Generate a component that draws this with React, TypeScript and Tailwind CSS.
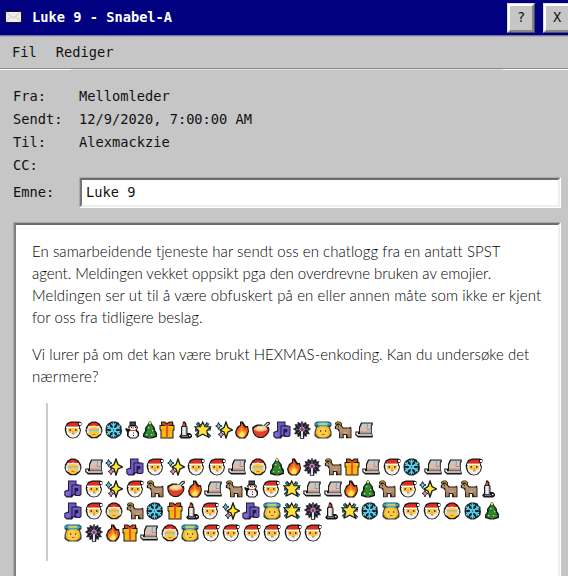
import type { ReactNode } from "react";

type Kind =
  | "santa" | "mrs" | "snowflake" | "snowman" | "tree" | "gift" | "candle" | "star"
  | "sparkles" | "fire" | "bowl" | "notes" | "firework" | "angel" | "goat" | "sled";

const ink = "#171717";

const art: Record<Kind, ReactNode> = {
  santa: (
    <>
      <path d="M1 6 3 2 7 .5H15L17.5 1.5V4L15.5 5.5 17 9 16 13 13 16.5 9 17.5 5 16.5 2 13.5.7 9Z" fill={ink} />
      <path d="M2 8 4 6H14L16 9 15 13 12 16 9 16.7 6 16 3 13Z" fill="#f5f3ef" />
      <path d="M4 7H14V11L12 12H6L4 11Z" fill="#ffc83d" />
      <path d="M2.5 5.5 4 3 7 1.7H14V4L15 5.5Z" fill="#e9291c" />
      <path d="M2 5.5H15V7H2ZM15 2H17V4H15Z" fill="#fff" />
      <path d="M5.5 8H7V10H5.5ZM11 8H12.5V10H11ZM8 12.5H10.5V13.3H8Z" fill="#65401e" />
      <path d="M8 9.5H10V11.5H8Z" fill="#f59f5c" />
    </>
  ),
  mrs: (
    <>
      <path d="M1 6.5 3.5 2.5 7 .5H11L14.5 2.5 17 6.5 17.5 10 16 14 12 17.3H6L2 14 .5 10Z" fill={ink} />
      <path d="M1.8 8 4 4.5H14L16.2 8V12L14 14H4L1.8 12Z" fill="#e6e4e1" />
      <path d="M3.7 7 6 6H12L14.3 7V13L12 15.5 9 16.3 6 15.5 3.7 13Z" fill="#ffc83d" />
      <path d="M3.5 5 6 2.3 9 1.5 12 2.3 14.5 5 12 6 9 5 6 6Z" fill="#e9291c" />
      <path d="M3 5.3 6 5.2 9 4.5 12 5.2 15 5.3 13.5 6.5 9 5.8 4.5 6.5Z" fill="#fff" />
      <path d="M4 9H8V11H4ZM10 9H14V11H10Z" fill="#9fd3e6" />
      <path d="M4 8.8H14" stroke="#8a8a70" strokeWidth=".5" />
      <path d="M7.5 13H10.5V14H7.5Z" fill="#d9662a" />
    </>
  ),
  snowflake: (
    <>
      <path d="M6.5 .5H10.5L13.5 1.5 15 4 16.5 5V8L17 9 16.5 13 14 15.5 10.5 17.5H6.5L3 15.5 1 13 .5 9 1 5 3 2.5Z" fill="#17232b" />
      <path d="M8.5 1.5V16.5M2 5 15 13M2 13 15 5" stroke="#6ad8f0" strokeWidth="1.5" fill="none" />
      <path d="M6 2.5 8.5 4.8 11 2.5M6 15.5 8.5 13.2 11 15.5M2 7.8 4.6 7 4.2 3.8M15 7.8 12.4 7 12.8 3.8M2 10.2 4.6 11 4.2 14.2M15 10.2 12.4 11 12.8 14.2" stroke="#55cfeb" strokeWidth="1.1" fill="none" />
      <path d="M8.5 6.3 11.2 9 8.5 11.7 5.8 9Z" fill="#55cfeb" />
      <path d="M8 8.5H9V9.5H8Z" fill="#17232b" />
    </>
  ),
  snowman: (
    <>
      <path d="M5.5.5H12V4L14 6 13 9 15 11V15L12 17.5H6L3 15V11L1.5 9V7L5 8 4 6 5.5 4Z" fill={ink} />
      <path d="M6.5 1.5H11.5V4H6.5Z" fill="#44444b" />
      <path d="M5.5 5.5H12.5V8L11 9H7L5.5 8ZM5 10.5 7 9.5H11L13.5 12V15L11.5 16.5H6.5L4.5 14.5Z" fill="#f8f8f8" />
      <path d="M6 9H12V10H6ZM8.5 6.5H10V7.5H8.5Z" fill="#e64228" />
      <path d="M7 6H8V7H7ZM11 6H12V7H11ZM9 11.5H10V12.5H9ZM9 14H10V15H9Z" fill={ink} />
    </>
  ),
  tree: (
    <>
      <path d="M8 .5H10L11 3 14 7V9L16 12V16L11 17.5H7L2 16V13L4 10V7L7 3Z" fill="#142018" />
      <path d="M9 2 12.8 7.5 12 8 15 14.5 11.5 16H6.5L3 14.5 6 9 5.3 7.5Z" fill="#168b39" />
      <path d="M8 1H10V3H8ZM7 6H8.3V7.3H7ZM11 9H12.3V10.3H11ZM5 13H6.3V14.3H5ZM10 13H11.3V14.3H10Z" fill="#ffd735" />
      <path d="M9.5 6.5H11V8H9.5ZM7 10H8.5V11.5H7ZM12 13H13.5V14.5H12Z" fill="#e4402c" />
      <path d="M8 15H10V17H8Z" fill="#80502c" />
    </>
  ),
  gift: (
    <>
      <path d="M3 .5H7L9 2 11 .5H15L15.5 4H16.5V9L15.5 10V17.5H2.5V10L1.5 9V4H3Z" fill={ink} />
      <path d="M2.5 5H15.5V8.5H2.5ZM3.5 8.5H14.5V16.5H3.5Z" fill="#fcb916" />
      <path d="M3.5 8.5H14.5V9.3H3.5Z" fill="#e69a14" />
      <path d="M8 4.5H10V16.5H8ZM4 1.5H7L9 4 11 1.5H14V3.5L10 5H8L4 3.5Z" fill="#e75121" />
      <path d="M5.5 2.2H6.5L7.5 3.5H6.5ZM11.5 2.2H12.5L11.5 3.5H10.5Z" fill="#8a2e12" />
    </>
  ),
  candle: (
    <>
      <path d="M7 .5H9L10.5 3V5L11.5 6V12H14L16 14V16L14 17.5H5L3 15.5 5 13V6L6.5 4Z" fill={ink} />
      <path d="M8 1.5 9.5 4 8.8 5.5H7.3L6.8 4Z" fill="#e64a2e" />
      <path d="M6.2 6H10.2V14H6.2Z" fill="#e9e8ea" />
      <path d="M9.2 6H10.2V14H9.2Z" fill="#bfc0c6" />
      <path d="M5 14.5H12V16H6Z" fill="#77777c" />
      <path d="M13 14H14.5V15.3H13Z" fill="#fff" />
    </>
  ),
  star: (
    <>
      <path d="M3 2 6 5M14 2 12 5M1 9H5M13 8H17M2 15 5 12M12 12 16 16" stroke="#192734" strokeWidth="3.2" />
      <path d="M2.5 2 5 4.5M14.5 2 12 5M2 15 4 13M13 13 16 16M14 8.5H17M1 9H4" stroke="#278eaa" strokeWidth="1.2" />
      <path d="M8.7 .9 11 5.8H16.6L12.7 9.8 14.2 16 8.8 13.2 3.4 16 4.8 9.8 .9 5.8H6.5Z" fill="#ffe13b" stroke={ink} strokeWidth="1.1" />
    </>
  ),
  sparkles: (
    <>
      <path d="M11 1 13 6.5 17.5 9 13 11 11 17 9 11 5 9 9 6.5Z" fill="#ffe928" stroke={ink} strokeWidth="1.3" />
      <path d="M3.5 1.5 4.8 4 7 5 4.8 6 3.5 8.5 2.5 6 .7 5 2.5 4Z" fill="#4fc8e6" stroke={ink} strokeWidth=".9" />
      <path d="M6 10 7 12.5 9 13.5 7 14.5 6 17 5 14.5 3 13.5 5 12.5Z" fill="#d890bd" stroke={ink} strokeWidth=".8" />
    </>
  ),
  fire: (
    <>
      <path d="M7 .5H10L12 4 13 5H15L16 10 15 14 12 17.5H6L3 15 2 11 4 6 7 4Z" fill={ink} />
      <path d="M8 1.5 10.5 5 12 7 14 6 15 10 13.5 14 11 16.5H6.5L4 14 3.3 10 6 6 8 5Z" fill="#ee5a1f" />
      <path d="M8 5 10.5 9 11.5 10 13 9.5V12.5L11 16H6.5L4.5 13V11L7.5 9Z" fill="#ff9620" />
      <path d="M9 10 12 12.5 11 15.5 9 16.5 6.5 15.5 6 13.5Z" fill="#ffe45c" />
    </>
  ),
  bowl: (
    <>
      <path d="M11 5 15 1 17.5 .8 18 3 14.5 6H17L17.5 9 16.5 12 14 15 11 17H6.5L3 15 1 12 .3 9V6L5 3.5H10Z" fill={ink} />
      <path d="M1.3 8H16.5L15.5 11.5 13 14.5 10 16H7L4 14.5 2 11.5Z" fill="#e1402b" />
      <path d="M2 7 6 4.8H12L15.5 7 14 9.5 10 10.5H6L2.5 9Z" fill="#f4bf78" />
      <path d="M4 7 7 5.8H11L13.5 7.3 11 8.7H6Z" fill="#ffe0a4" />
      <path d="M10.5 7.5 16.5 2" stroke="#cfd8df" strokeWidth="1.6" />
    </>
  ),
  notes: (
    <>
      <path d="M4 .5H12.5V4L17.5 5V14.5L16 16H11.5L10 15 8 17.5H2.5L.3 15.5V11L4 9.5Z" fill="#211d38" />
      <path d="M5 1.5H11.5V4.5H7.5V14L6.5 16.3H2.7L1.3 15V12L3 10.8H5Z" fill="#7059c6" />
      <path d="M8.5 5.5H16.5V13.7L15.3 15H12.6L11.8 13.8V12L13 11H14.3V8H10.5V13.5L9 14.5H8.5Z" fill="#7059c6" />
      <path d="M1.5 12H5.5V15.5H2.5Z" fill="#8067d1" />
    </>
  ),
  firework: (
    <>
      <path d="M9 .3 10.3 2.8 13 1.2 13.2 3.8 16 3.5 14.8 6.3 17.7 8 14.8 9.8 16.5 13 13.4 12.8 13.5 15.6 11 14.5V17.5H7.3V14.5L4.8 15.8 4.7 12.8 1.5 13 3.2 9.8 .3 8 3.2 6.3 2 3.5 4.8 3.8 5 1.2 7.7 2.8Z" fill="#211d29" stroke="#211d29" strokeWidth=".6" />
      <path d="M9 2V5M13 4.5 11.3 6.2M15 8.3H12.5M13 12 11.5 10.6M5 12 6.5 10.6M3 8.3H5.5M5 4.5 6.7 6.2" stroke="#8b7599" strokeWidth="1" />
      <path d="M9 5.8 11 7 11.3 9.2 9 10.8 6.8 9.2 7 7Z" fill="#6b4668" stroke="#e9a9d3" strokeWidth="1" />
      <path d="M8 10.8H10V17H8Z" fill="#dfeaf0" />
    </>
  ),
  angel: (
    <>
      <path d="M.5 2 3 .5H15L17.5 2V5L16 6 17.5 11V15L14 17.5H4L.5 15V11L2 6 .5 5Z" fill="#3c423e" />
      <path d="M1.5 12 3 6.5 6 5H12L15 6.5 16.5 12 15 15 12 16.5H6L3 15Z" fill="#f2bb30" />
      <path d="M4 8.5 8 6 14 9V13L11.5 15.5 9 16.3 6 15.5 4 13Z" fill="#ffcd48" />
      <path d="M2 3 5 1.6H13L16 3 13 4.5H5Z" fill="#ffd83f" stroke="#29a7d8" strokeWidth="1.4" />
      <path d="M6 9H7.2V11H6ZM11 9H12.2V11H11ZM7.8 13H10.6V13.8H7.8Z" fill="#805021" />
    </>
  ),
  goat: (
    <>
      <path d="M1 2 3 .5H6L8 2.5V5L9.5 6.5H15L17 5.5 17.5 8V17.3H12V14H9.8V17.3H5V11L3.5 8.5 .8 8V5L3 4 1 3.5Z" fill="#252019" />
      <path d="M2 5.5 5 3.8 7 5.3 8.5 7.5H15L16.5 7.5V12.8H5.8L5.3 8 2 7.2Z" fill="#b8916f" />
      <path d="M6 11.5H8.7V16.4H6ZM13.1 12H16.5V16.4H14.6L13.1 14Z" fill="#a98262" />
      <path d="M9.5 11.5H13V12.7H9.5Z" fill="#d0b498" />
      <path d="M2 2.5 4 1.6 6 2 6.8 4" stroke="#b8912c" strokeWidth="1.3" fill="none" />
      <path d="M4 5.2H5V6.2H4Z" fill={ink} />
    </>
  ),
  sled: (
    <>
      <path d="M6 1.5H17.8V3.8L16.8 5V12.5L17.7 14V16.5H3L.3 14V10.5H4V6Z" fill={ink} />
      <path d="M7 2.5H16.8L15.8 4.5V12.2H5V7Z" fill="#c9c8c9" />
      <path d="M6.7 6H11.5V8.5H15.8V12.2H5V7.5Z" fill="#dcbcad" />
      <path d="M5 10.5H15.8V12.2H5Z" fill="#b99785" />
      <path d="M1.3 11.5H3V13.3H16.8V14.7H3L1.3 13.3Z" fill="#f0f0f0" />
      <path d="M12.5 2.5 12 8.5H15.8" stroke="#85828a" strokeWidth=".7" fill="none" />
    </>
  ),
};

const advance: Partial<Record<Kind, string>> = {
  snowman: "w-[16.7px]",
  tree: "w-[17.1px]",
  candle: "w-[16.5px]",
  fire: "w-[17.1px]",
  gift: "w-[18px]",
};

function Emoji({ kind }: { kind: Kind }) {
  return (
    <span className={`flex shrink-0 justify-center ${advance[kind] ?? "w-[20.5px]"}`}>
      <svg viewBox="0 0 18 18" className="h-[18px] w-[18px] shrink-0" aria-hidden="true">
        {art[kind]}
      </svg>
    </span>
  );
}

const firstRow = "santa mrs snowflake snowman tree gift candle star sparkles fire bowl notes firework angel goat sled";
const cipherRows = [
  "mrs sled sparkles notes santa sparkles santa santa sled mrs tree fire firework goat gift sled santa snowflake sled sled santa",
  "notes santa sparkles santa goat bowl fire sled goat snowman santa star sled sled fire tree goat santa sparkles goat goat candle",
  "notes santa mrs goat snowflake gift candle santa sparkles notes angel star firework candle star snowflake angel santa santa mrs snowflake tree",
  "angel firework fire gift sled mrs angel santa santa santa santa santa santa",
];

function EmojiRow({ row }: { row: string }) {
  return (
    <div className="flex h-[22px] items-center">
      {row.split(" ").map((kind, i) => (
        <Emoji key={i} kind={kind as Kind} />
      ))}
    </div>
  );
}

function WindowButton({ label }: { label: string }) {
  return (
    <button className="h-[30px] w-[28px] shrink-0 border border-t-[#dedede] border-r-[#50505c] border-b-[#50505c] border-l-[#dedede] bg-[#c6c6c6]">
      <span className="flex h-full w-full items-center justify-center border-2 border-t-white border-r-[#858585] border-b-[#858585] border-l-white pb-0.5 text-[13.7px]">
        {label}
      </span>
    </button>
  );
}

function Field({ label, value }: { label: string; value?: string }) {
  return (
    <div className="flex h-[23px] items-center">
      <span className="w-[66px]">{label}</span>
      <span>{value}</span>
    </div>
  );
}

export default function App() {
  return (
    <main className="flex h-[576px] w-[568px] flex-col overflow-hidden bg-[#c6c6c6] font-['DejaVu_Sans_Mono',monospace] text-[13.7px] text-[#111]">
      <header className="flex h-[35px] shrink-0 items-center bg-[#000080] pl-[5px] text-white">
        <svg viewBox="0 0 17 12" className="mt-[-2px] h-3 w-[17px] shrink-0" aria-hidden="true">
          <path d="M0 0H17V12H0Z" fill="#171717" />
          <path d="M1 1H16V11H1Z" fill="#eee" />
          <path d="M1 1 8.5 7 16 1M1 11 6 5.5M16 11 11 5.5" fill="none" stroke="#c5c5c5" />
        </svg>
        <h1 className="ml-[10px] w-[475px] shrink-0 text-[13.7px] font-bold">Luke 9 - Snabel-A</h1>
        <div className="flex gap-2 pt-px text-[#111]">
          <WindowButton label="?" />
          <WindowButton label="X" />
        </div>
      </header>
      <div className="h-px shrink-0 bg-[#7575a8]" />
      <div className="h-px shrink-0 bg-[#aaaab9]" />
      <nav className="flex h-[31px] shrink-0 items-center gap-[19px] pl-3">
        <span>Fil</span>
        <span>Rediger</span>
      </nav>
      <div className="h-px shrink-0 bg-[#8c8c8c]" />
      <div className="flex h-px shrink-0 bg-[#dedede]">
        <span className="w-[71px] bg-white" />
        <span className="ml-auto w-[65px] bg-white" />
      </div>

      <section className="shrink-0 pt-[15px] pl-[13px]">
        <Field label="Fra:" value="Mellomleder" />
        <Field label="Sendt:" value="12/9/2020, 7:00:00 AM" />
        <Field label="Til:" value="Alexmackzie" />
        <Field label="CC:" />
        <div className="flex h-[31px] items-center">
          <span className="w-[66px]">Emne:</span>
          <div className="h-[31px] w-[482px] border border-t-[#aaa] border-r-white border-b-white border-l-[#aaa]">
            <div className="flex h-full items-center border-2 border-t-[#6c6c6c] border-r-[#eee] border-b-[#eee] border-l-[#777] bg-white pl-1">
              Luke 9
            </div>
          </div>
        </div>
      </section>

      <section className="mt-[14px] ml-[13px] h-[380px] w-[548px] shrink-0 border border-t-[#aaa] border-r-white border-b-white border-l-[#aaa]">
        <div className="h-full border-2 border-t-[#6c6c6c] border-r-[#eee] border-b-0 border-l-[#808080] bg-white pt-[15px] pl-4">
          <div className="font-[Lato,sans-serif] text-[15px] leading-[22px] font-light whitespace-nowrap text-black">
            <p>
              <span className="block tracking-[0.06px]">En samarbeidende tjeneste har sendt oss en chatlogg fra en antatt SPST</span>
              <span className="block tracking-[-0.05px]">agent. Meldingen vekket oppsikt pga den overdrevne bruken av emojier.</span>
              <span className="block tracking-[0.11px]">Meldingen ser ut til å være obfuskert på en eller annen måte som ikke er kjent</span>
              <span className="block tracking-[0.06px]">for oss fra tidligere beslag.</span>
            </p>
            <p className="mt-[15px]">
              <span className="block tracking-[0.03px]">Vi lurer på om det kan være brukt HEXMAS-enkoding. Kan du undersøke det</span>
              <span className="block tracking-[0.3px]">nærmere?</span>
            </p>
          </div>
          <blockquote className="mt-4 ml-[14px] h-[158px] border-l-2 border-[#ccc] pt-4 pl-[15px]">
            <EmojiRow row={firstRow} />
            <div className="mt-[15px]">
              {cipherRows.map((row) => (
                <EmojiRow key={row} row={row} />
              ))}
            </div>
          </blockquote>
        </div>
      </section>
    </main>
  );
}
